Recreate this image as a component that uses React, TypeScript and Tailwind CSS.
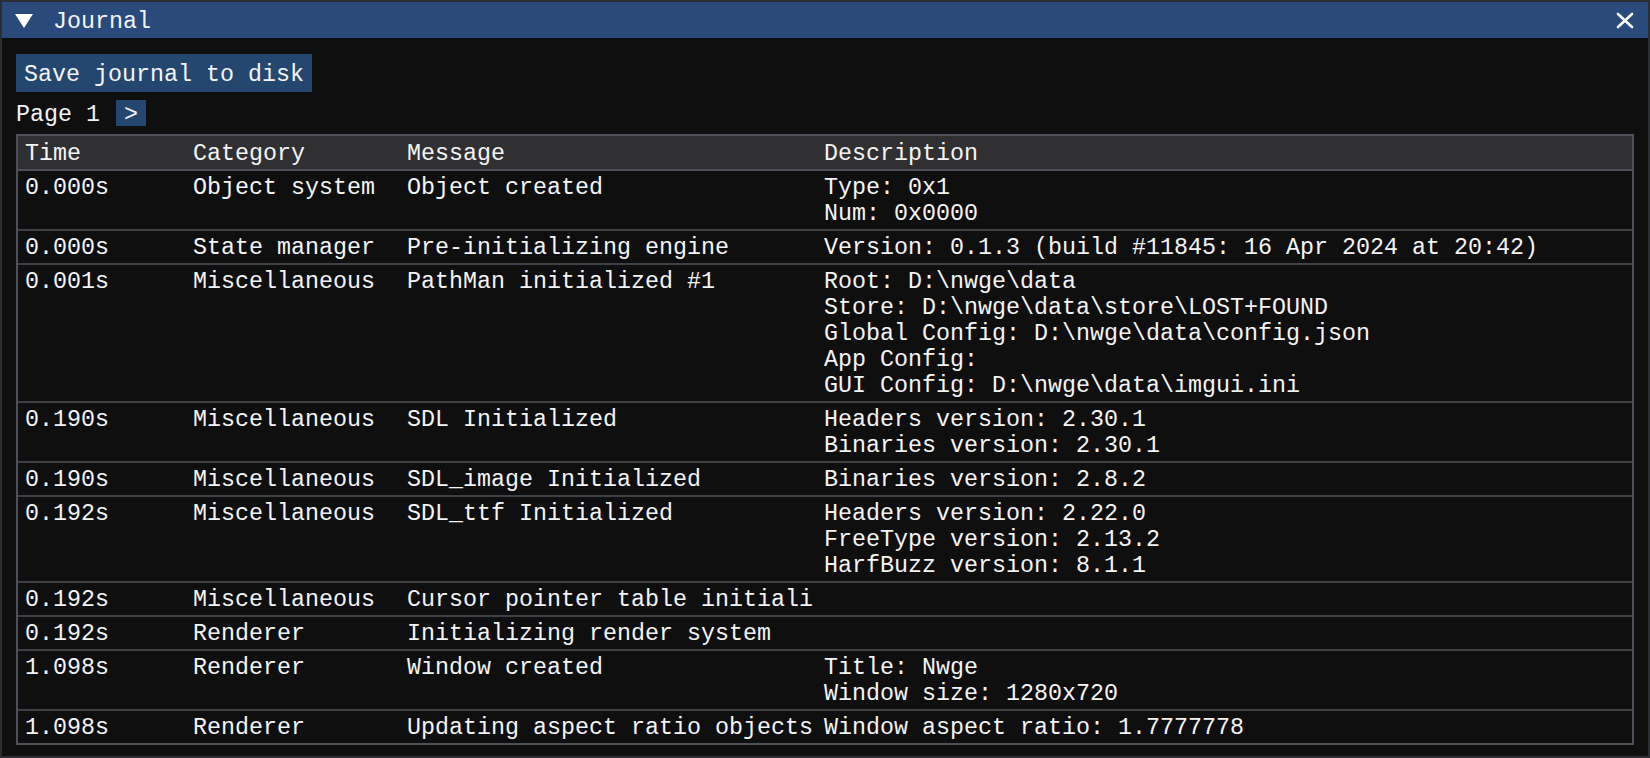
const rows = [
  { time: "0.000s", category: "Object system", message: "Object created", description: ["Type: 0x1", "Num: 0x0000"] },
  { time: "0.000s", category: "State manager", message: "Pre-initializing engine", description: ["Version: 0.1.3 (build #11845: 16 Apr 2024 at 20:42)"] },
  {
    time: "0.001s",
    category: "Miscellaneous",
    message: "PathMan initialized #1",
    description: [
      "Root: D:\\nwge\\data",
      "Store: D:\\nwge\\data\\store\\LOST+FOUND",
      "Global Config: D:\\nwge\\data\\config.json",
      "App Config:",
      "GUI Config: D:\\nwge\\data\\imgui.ini",
    ],
  },
  { time: "0.190s", category: "Miscellaneous", message: "SDL Initialized", description: ["Headers version: 2.30.1", "Binaries version: 2.30.1"] },
  { time: "0.190s", category: "Miscellaneous", message: "SDL_image Initialized", description: ["Binaries version: 2.8.2"] },
  {
    time: "0.192s",
    category: "Miscellaneous",
    message: "SDL_ttf Initialized",
    description: ["Headers version: 2.22.0", "FreeType version: 2.13.2", "HarfBuzz version: 8.1.1"],
  },
  // column clips the rest of this message in the original
  { time: "0.192s", category: "Miscellaneous", message: "Cursor pointer table initiali", description: [] },
  { time: "0.192s", category: "Renderer", message: "Initializing render system", description: [] },
  { time: "1.098s", category: "Renderer", message: "Window created", description: ["Title: Nwge", "Window size: 1280x720"] },
  { time: "1.098s", category: "Renderer", message: "Updating aspect ratio objects", description: ["Window aspect ratio: 1.7777778"] },
];

const App: React.FC = () => {
  return (
    <div
      className="w-[1650px] h-[758px] flex flex-col bg-[#0f0f0f] border-2 border-[#2c2c33] text-[#f4f4f4] text-[23.33px] leading-[26px] overflow-hidden"
      style={{ fontFamily: '"Liberation Mono", "DejaVu Sans Mono", monospace' }}
    >
      {/* title bar */}
      <div className="h-[36px] shrink-0 bg-[#294a7a] flex items-center pl-[13px] pr-[13px]">
        <svg width="18" height="16" viewBox="0 0 18 16" className="shrink-0 mt-[2px]">
          <polygon points="0,1 18,1 9,15" fill="#ffffff" />
        </svg>
        <span className="ml-[20px] pt-[4px]">Journal</span>
        <div className="flex-1" />
        <svg width="18" height="17" viewBox="0 0 18 17" className="shrink-0 mr-[1px] mt-[1px]">
          <path d="M2 2 L16 15 M16 2 L2 15" stroke="#ffffff" strokeWidth="2.6" strokeLinecap="round" />
        </svg>
      </div>

      <div className="flex-1 flex flex-col pt-[16px] px-[14px]">
        <div className="flex">
          <button className="h-[38px] px-[8px] pt-[3px] bg-[#24476f] text-[#f4f4f4]">Save journal to disk</button>
        </div>

        <div className="flex items-center gap-[16px] mt-[8px] h-[26px]">
          <span className="pt-[3px]">Page 1</span>
          <button className="h-[26px] px-[8px] pt-[2px] bg-[#24476f] text-[#f4f4f4]">&gt;</button>
        </div>

        <div className="mt-[8px] border-2 border-[#4f4f59]">
          <div className="flex bg-[#303033] pt-[5px] pb-[2px] whitespace-pre">
            <div className="w-[168px] shrink-0 px-[7px]">Time</div>
            <div className="w-[214px] shrink-0 px-[7px]">Category</div>
            <div className="w-[417px] shrink-0 px-[7px]">Message</div>
            <div className="flex-1 px-[7px]">Description</div>
          </div>
          {rows.map((row, i) => (
            <div
              key={i}
              className={
                "flex border-t-2 pt-[4px] pb-[2px] whitespace-pre " +
                (i === 0 ? "border-[#4f4f59]" : "border-[#404047]")
              }
            >
              <div className="w-[168px] shrink-0 px-[7px]">{row.time}</div>
              <div className="w-[214px] shrink-0 px-[7px]">{row.category}</div>
              <div className="w-[417px] shrink-0 pl-[7px]">{row.message}</div>
              <div className="flex-1 px-[7px] flex flex-col min-h-[26px]">
                {row.description.map((line, j) => (
                  <span key={j}>{line}</span>
                ))}
              </div>
            </div>
          ))}
        </div>
      </div>
    </div>
  );
};

export default App;
